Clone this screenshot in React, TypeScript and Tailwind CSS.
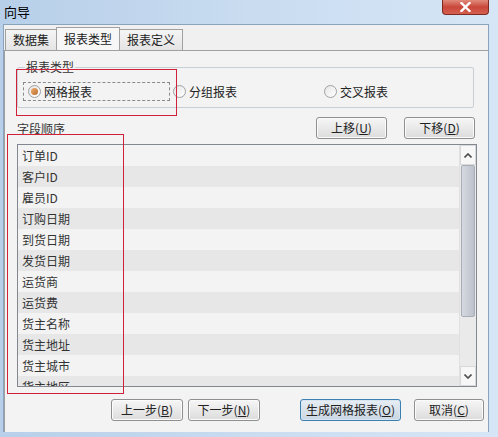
import React from "react";

const font = { fontFamily: '"Noto Sans CJK SC", "Noto Sans", sans-serif' };

function Btn({ label, k, w, def }: { label: string; k: string; w: string; def?: boolean }) {
  return (
    <div
      className={`${w} h-[22px] flex items-center justify-center rounded-[3px] border text-[12px] text-[#222] ${
        def
          ? "border-[#3c7fb1] bg-gradient-to-b from-[#e8eef4] to-[#c9d6e2] shadow-[inset_0_0_0_1px_#d8e6f2]"
          : "border-[#8e8f8f] bg-gradient-to-b from-[#f6f6f6] to-[#dcdcdc] shadow-[inset_0_0_0_1px_#fbfbfb]"
      }`}
    >
      <span>
        {label}(<span className="underline">{k}</span>)
      </span>
    </div>
  );
}

function Radio({ checked }: { checked?: boolean }) {
  return (
    <div className="w-[13px] h-[13px] rounded-full border border-[#a0a0a0] bg-gradient-to-br from-[#e6e6e6] to-[#ffffff] flex items-center justify-center">
      {checked && <div className="w-[7px] h-[7px] rounded-full bg-gradient-to-br from-[#f0b070] to-[#b86a2a]" />}
    </div>
  );
}

const rows = [
  "订单ID",
  "客户ID",
  "雇员ID",
  "订购日期",
  "到货日期",
  "发货日期",
  "运货商",
  "运货费",
  "货主名称",
  "货主地址",
  "货主城市",
  "货主地区",
];

export default function App() {
  return (
    <div
      className="relative w-[498px] h-[437px] overflow-hidden bg-gradient-to-r from-[#b7cfe9] via-[#c9dcf0] to-[#d6e6f6]"
      style={font}
    >
      {/* title bar */}
      <div className="h-[24px] flex items-start justify-between">
        <div className="pl-[4px] pt-[2px] text-[13px] text-black leading-[20px]">向导</div>
        <div className="mr-[9px] w-[47px] h-[15px] rounded-b-[4px] border border-t-0 border-[#7d2a22] bg-gradient-to-b from-[#e08a7c] via-[#c9463a] to-[#d4604f] flex items-center justify-center">
          <svg width="11" height="10" viewBox="0 0 11 10">
            <path d="M1.5 1 L9.5 9 M9.5 1 L1.5 9" stroke="#ffffff" strokeWidth="2.4" strokeLinecap="square" />
          </svg>
        </div>
      </div>

      {/* client area */}
      <div className="ml-[3px] w-[486px] h-[408px] bg-[#f0f0f0] border border-[#8aa3bd] relative">
        {/* tabs */}
        <div className="flex items-end h-[25px] pl-[1px] pt-[2px]">
          <div className="h-[21px] px-[7px] flex items-center border border-b-0 border-[#a0a0a0] bg-gradient-to-b from-[#f5f5f5] to-[#e4e4e4] text-[12px] text-[#222]">
            数据集
          </div>
          <div className="h-[23px] px-[7px] -mx-[1px] z-10 flex items-center border border-b-0 border-[#a0a0a0] bg-[#f7f7f7] text-[12px] text-[#222]">
            报表类型
          </div>
          <div className="h-[21px] px-[7px] flex items-center border border-b-0 border-[#a0a0a0] bg-gradient-to-b from-[#f5f5f5] to-[#e4e4e4] text-[12px] text-[#222]">
            报表定义
          </div>
        </div>
        <div className="h-[382px] border-t border-l border-[#a0a0a0] bg-[#f3f3f3]">
          {/* group box */}
          <div className="relative mt-[16px] ml-[12px] w-[457px] h-[41px] border border-[#c8cfd4] rounded-[2px]">
            <div className="absolute left-[7px] -top-[9px] px-[1px] bg-[#f3f3f3] text-[12px] leading-[16px] text-[#333]">
              报表类型
            </div>
            <div className="flex items-center h-full pt-[8px]">
              <div className="ml-[5px] w-[147px] h-[19px] border border-dashed border-[#8a8a8a] flex items-center pl-[4px] gap-[3px]">
                <Radio checked />
                <span className="text-[12px] text-[#222]">网格报表</span>
              </div>
              <div className="ml-[3px] flex items-center gap-[3px]">
                <Radio />
                <span className="text-[12px] text-[#222]">分组报表</span>
              </div>
              <div className="ml-[87px] flex items-center gap-[3px]">
                <Radio />
                <span className="text-[12px] text-[#222]">交叉报表</span>
              </div>
            </div>
          </div>

          {/* field order row */}
          <div className="flex items-start mt-[9px] ml-[12px] w-[460px] h-[27px]">
            <div className="mt-[4px] text-[12px] text-[#333] leading-[16px]">字段顺序</div>
            <div className="ml-auto flex gap-[17px] mr-[2px]">
              <Btn label="上移" k="U" w="w-[71px]" />
              <Btn label="下移" k="D" w="w-[71px]" />
            </div>
          </div>

          {/* list */}
          <div className="ml-[12px] w-[460px] h-[243px] border border-[#828790] flex overflow-hidden">
            <div className="flex-1 overflow-hidden">
              {rows.map((r, i) => (
                <div
                  key={r}
                  className={`h-[21px] flex items-center pl-[4px] text-[12px] text-[#333] ${
                    i % 2 === 0 ? "bg-[#f3f3f3]" : "bg-[#e7e7e7]"
                  }`}
                >
                  {r}
                </div>
              ))}
            </div>
            <div className="w-[17px] flex flex-col bg-[#eaeaea] border-l border-[#e0e0e0]">
              <div className="h-[20px] flex items-center justify-center bg-[#f7f7f7] border border-[#d9d9d9]">
                <svg width="8" height="5" viewBox="0 0 8 5">
                  <path d="M0.5 4.5 L4 1 L7.5 4.5" stroke="#4d4d4d" strokeWidth="1.6" fill="none" />
                </svg>
              </div>
              <div className="h-[152px] mx-[1px] rounded-[2px] border border-[#a8adb8] bg-gradient-to-r from-[#d6d9df] via-[#c9cdd6] to-[#bcc1cb]" />
              <div className="flex-1" />
              <div className="h-[20px] flex items-center justify-center bg-[#f7f7f7] border border-[#d9d9d9]">
                <svg width="8" height="5" viewBox="0 0 8 5">
                  <path d="M0.5 0.5 L4 4 L7.5 0.5" stroke="#4d4d4d" strokeWidth="1.6" fill="none" />
                </svg>
              </div>
            </div>
          </div>

          {/* bottom buttons */}
          <div className="flex mt-[12px] ml-[106px]">
            <Btn label="上一步" k="B" w="w-[72px]" />
            <div className="ml-[5px]">
              <Btn label="下一步" k="N" w="w-[72px]" />
            </div>
            <div className="ml-[40px]">
              <Btn label="生成网格报表" k="O" w="w-[101px]" def />
            </div>
            <div className="ml-[13px]">
              <Btn label="取消" k="C" w="w-[70px]" />
            </div>
          </div>
        </div>

        {/* red annotation boxes */}
        <div className="absolute z-20 left-[12px] top-[44px] w-[161px] h-[47px] border border-[#d0203a] pointer-events-none" />
        <div className="absolute z-20 left-[3px] top-[109px] w-[117px] h-[260px] border border-[#d0203a] pointer-events-none" />
      </div>
    </div>
  );
}
